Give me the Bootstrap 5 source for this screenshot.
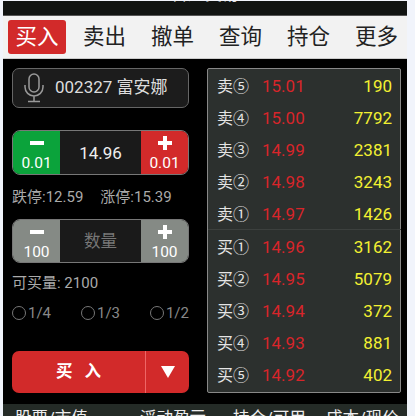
<!DOCTYPE html>
<html lang="zh"><head><meta charset="utf-8">
<link href="https://cdn.jsdelivr.net/npm/bootstrap@5.3.0/dist/css/bootstrap.min.css" rel="stylesheet">
<style>
html,body{height:416px;overflow:hidden;background:#f1f4fb;}
body{font-family:Roboto,"Noto Sans CJK SC",sans-serif;color:#ddd;}
.screen{width:404px;margin-left:3px;height:416px;overflow:hidden;background:#000;margin-top:1px;}
.topbar{height:15px;background:#111412;border-bottom:1px solid #555;overflow:hidden;justify-content:center;}
.topbar span{font-size:17px;line-height:17px;margin-top:-15px;color:#ddd;}
.tabbar{height:43px;background:#f2f2f2;border-bottom:1px solid #ccc;padding:4px 5px 4px 5px;}
.tabitem{font-size:21.500px;line-height:34px;color:#222;width:59px;flex:none;text-align:center;margin-right:9px;border-radius:3px;}
.tabitem.on{background:#d22a2a;color:#fff;width:58px;}
.tabitem:last-child{margin-right:0;}
.body{height:343px;padding:9px 0 0 9px;}
.leftcol{width:177px;margin-right:18px;flex:none;}
.code{height:40px;background:#1c1c1c;border:1px solid #666;border-radius:7px;font-size:17px;color:#ddd;padding-left:11px;gap:11px;white-space:nowrap;}
.stepper{height:45px;border:1px solid #777;border-radius:8px;overflow:hidden;background:#1a1a1a;margin-top:22px;}
.stepbtn{width:47px;flex:none;color:#fff;font-size:15.5px;line-height:18px;padding-top:5px;}
.stepbtn svg{display:block;margin:0 auto 4px;}
.green{background:#0ba33b;}.red{background:#d22a2a;}.grey{background:#858a85;}
.mid{font-size:17px;color:#eee;padding-top:2px;}
.mid.ph{color:#777;font-size:16.5px;}
.limits{font-size:15px;color:#aaa;margin-top:12px;line-height:20px;gap:17px;white-space:nowrap;}
.stepper.two{margin-top:12px;height:44px;}
.can{font-size:15px;color:#aaa;margin-top:10px;line-height:20px;}
.ratios{font-size:15px;color:#888;margin-top:10px;line-height:20px;}
.ratios span{display:flex;align-items:center;gap:2px;}
.ratios b{display:block;width:14px;height:14px;border:1px solid #777;border-radius:50%;font-weight:400;}
.buy{height:42px;margin-top:28px;background:#d22a2a;border-radius:7px;color:#fff;font-size:16.5px;font-weight:700;}
.buy .txt{flex:1;word-spacing:8px;}
.buy .arr{width:44px;border-left:1px solid #e66;}
.book{width:194px;height:325px;flex:none;background:#2c302e;border:1px solid #888;border-radius:2px;padding:0 8px 0 9px;}
.lv{height:32px;font-size:17px;padding-top:3px;line-height:1.2;color:#e5e5e5;align-items:center;}
.lv .nm{width:45px;font-size:16px;white-space:nowrap;}
.lv .pr{color:#d8252a;flex:1;}
.lv .vol{color:#f3f032;}
.divider{border-top:1px solid #3c403e;margin:0 -9px 0 -9px;}
.foot{height:30px;background:#242b27;margin-top:2px;font-size:16.5px;color:#eee;padding:3px 0 0 12px;white-space:nowrap;overflow:hidden;}
</style></head><body>
<div class="screen">
<div class="topbar d-flex"><span>普通交易</span></div>
<div class="tabbar d-flex">
<div class="tabitem on">买入</div><div class="tabitem">卖出</div><div class="tabitem">撤单</div><div class="tabitem">查询</div><div class="tabitem">持仓</div><div class="tabitem">更多</div>
</div>
<div class="body d-flex">
<div class="leftcol">
<div class="code d-flex align-items-center">
<svg width="20" height="30" viewBox="0 0 20 30" fill="none" stroke="#999" stroke-width="1.5"><rect x="5" y="1" width="10" height="18" rx="5"/><path d="M1 12v2a9 9 0 0 0 18 0v-2M10 23v5M4 28.500h12"/></svg>
<span>002327 富安娜</span></div>
<div class="stepper d-flex">
<div class="stepbtn green text-center"><svg width="14" height="14" viewBox="0 0 14 14"><path d="M0 5h14v4H0z" fill="#fff"/></svg>0.01</div><div class="mid flex-fill d-flex align-items-center justify-content-center">14.96</div><div class="stepbtn red text-center"><svg width="14" height="14" viewBox="0 0 14 14"><path d="M5 0h4v5h5v4H9v5H5V9H0V5h5z" fill="#fff"/></svg>0.01</div>
</div>
<div class="limits d-flex"><span>跌停:12.59</span><span>涨停:15.39</span></div>
<div class="stepper two d-flex">
<div class="stepbtn grey text-center"><svg width="14" height="14" viewBox="0 0 14 14"><path d="M0 5h14v4H0z" fill="#fff"/></svg>100</div><div class="mid ph flex-fill d-flex align-items-center justify-content-center">数量</div><div class="stepbtn grey text-center"><svg width="14" height="14" viewBox="0 0 14 14"><path d="M5 0h4v5h5v4H9v5H5V9H0V5h5z" fill="#fff"/></svg>100</div>
</div>
<div class="can">可买量: 2100</div>
<div class="ratios d-flex justify-content-between"><span><b></b>1/4</span><span><b></b>1/3</span><span><b></b>1/2</span></div>
<div class="buy d-flex align-items-center">
<div class="txt text-center">买 入</div>
<div class="arr h-100 d-flex align-items-center justify-content-center"><svg width="14" height="12" viewBox="0 0 14 12"><path d="M0 0h14L7 12z" fill="#fff"/></svg></div>
</div>
</div>
<div class="book">
<div class="lv d-flex"><span class="nm">卖⑤</span><span class="pr">15.01</span><span class="vol">190</span></div>
<div class="lv d-flex"><span class="nm">卖④</span><span class="pr">15.00</span><span class="vol">7792</span></div>
<div class="lv d-flex"><span class="nm">卖③</span><span class="pr">14.99</span><span class="vol">2381</span></div>
<div class="lv d-flex"><span class="nm">卖②</span><span class="pr">14.98</span><span class="vol">3243</span></div>
<div class="lv d-flex"><span class="nm">卖①</span><span class="pr">14.97</span><span class="vol">1426</span></div>
<div class="divider"></div>
<div class="lv d-flex"><span class="nm">买①</span><span class="pr">14.96</span><span class="vol">3162</span></div>
<div class="lv d-flex"><span class="nm">买②</span><span class="pr">14.95</span><span class="vol">5079</span></div>
<div class="lv d-flex"><span class="nm">买③</span><span class="pr">14.94</span><span class="vol">372</span></div>
<div class="lv d-flex"><span class="nm">买④</span><span class="pr">14.93</span><span class="vol">881</span></div>
<div class="lv d-flex"><span class="nm">买⑤</span><span class="pr">14.92</span><span class="vol">402</span></div>
</div>
</div>
<div class="foot d-flex"><span style="width:125px">股票/市值</span><span style="width:93px">浮动盈亏</span><span style="width:93px">持仓/可用</span><span>成本/现价</span></div>
</div>
<script src="https://cdn.jsdelivr.net/npm/bootstrap@5.3.0/dist/js/bootstrap.bundle.min.js"></script>
</body></html>
